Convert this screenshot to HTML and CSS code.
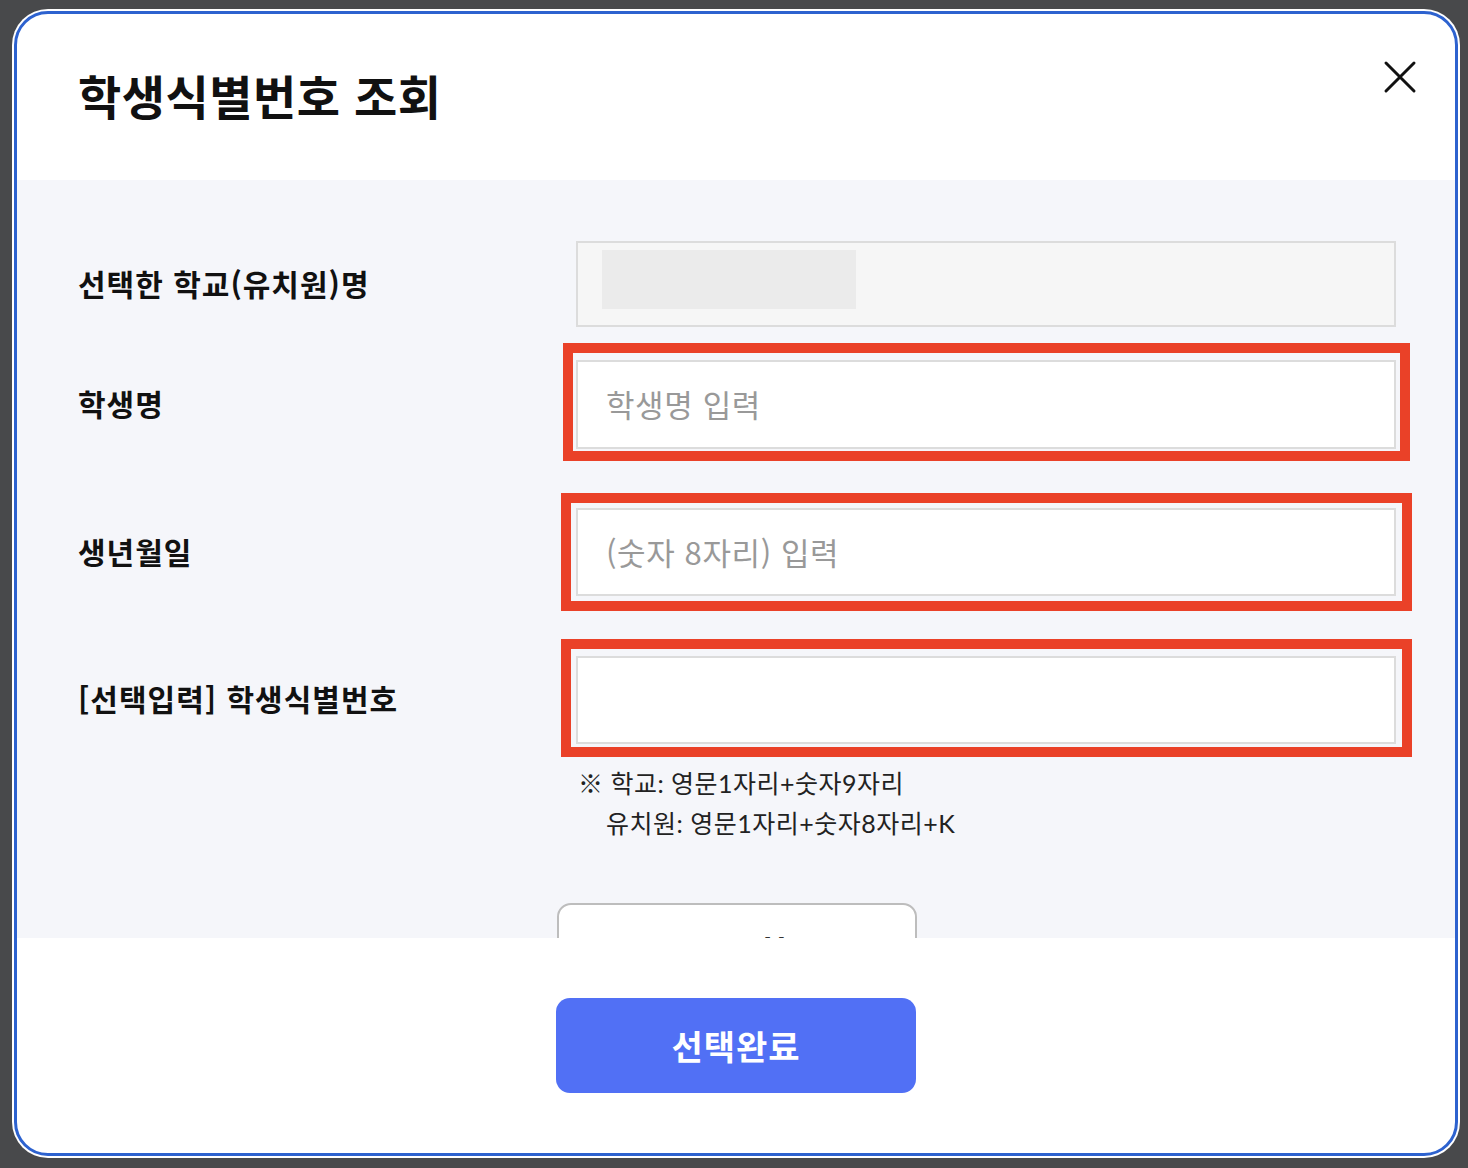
FILE: index.html
```html
<!DOCTYPE html>
<html lang="ko">
<head>
<meta charset="utf-8">
<title>학생식별번호 조회</title>
<link rel="stylesheet" href="styles.css">
</head>
<body>
<div class="modal">
  <header class="modal-header">
    <h1 class="title">학생식별번호 조회</h1>
    <button class="close" type="button" aria-label="닫기">
      <svg width="34" height="34" viewBox="0 0 34 34"><path d="M3 3 L31 31 M31 3 L3 31" stroke="#111" stroke-width="3" stroke-linecap="round" fill="none"/></svg>
    </button>
  </header>
  <section class="modal-body">
    <div class="row row-school">
      <div class="label">선택한 학교(유치원)명</div>
      <div class="field field-readonly"><span class="redacted"></span></div>
    </div>
    <div class="row row-name">
      <div class="label">학생명</div>
      <div class="field-wrap">
        <input class="field field-input" type="text" placeholder="학생명 입력">
        <span class="mark mark-name"></span>
      </div>
    </div>
    <div class="row row-birth">
      <div class="label">생년월일</div>
      <div class="field-wrap">
        <input class="field field-input" type="text" placeholder="(숫자 8자리) 입력">
        <span class="mark mark-birth"></span>
      </div>
    </div>
    <div class="row row-id">
      <div class="label">[선택입력] 학생식별번호</div>
      <div class="field-col">
        <div class="field-wrap">
          <input class="field field-input" type="text">
          <span class="mark mark-id"></span>
        </div>
        <div class="hint">
          <p class="hint-line">※ 학교: 영문1자리+숫자9자리</p>
          <p class="hint-line hint-indent">유치원: 영문1자리+숫자8자리+K</p>
        </div>
      </div>
    </div>
    <button class="btn btn-outline" type="button">조회</button>
  </section>
  <footer class="modal-footer">
    <button class="btn btn-primary" type="button">선택완료</button>
  </footer>
</div>
</body>
</html>
```
FILE: styles.css
```css
* { box-sizing: border-box; }
html, body { margin: 0; padding: 0; }
body {
  width: 1468px;
  height: 1168px;
  background: #48494b;
  font-family: "Noto Sans CJK KR", "Noto Sans", sans-serif;
  overflow: hidden;
}
.modal {
  position: relative;
  margin: 11px 0 0 14px;
  width: 1444px;
  height: 1145px;
  border: 3px solid #2d62cf;
  border-radius: 34px;
  box-shadow: 0 0 0 2px #ffffff;
  background: #ffffff;
  overflow: hidden;
  display: flex;
  flex-direction: column;
}
.modal-header {
  flex: 0 0 166px;
  padding: 50px 61px 0;
}
.title {
  margin: 0;
  font-size: 47px;
  font-weight: 700;
  line-height: 62px;
  color: #111;
  letter-spacing: 0.5px;
}
.close {
  position: absolute;
  top: 46px;
  right: 38px;
  width: 34px;
  height: 34px;
  padding: 0;
  border: 0;
  background: transparent;
}
.close svg { display: block; }
.modal-body {
  flex: 0 0 758px;
  background: #f5f6fa;
  overflow: hidden;
  padding: 61px 59px 0 61px;
}
.row {
  display: grid;
  grid-template-columns: 498px 820px;
  align-items: center;
}
.row-id { align-items: start; }
.row-name { margin-top: 33px; }
.row-birth { margin-top: 59px; }
.row-id { margin-top: 60px; }
.label {
  font-size: 30px;
  font-weight: 700;
  color: #111;
  line-height: 40px;
  letter-spacing: 1px;
  padding-bottom: 3px;
  font-family: "Noto Sans CJK KR", sans-serif;
}
.row-id .label { margin-top: 22px; }
.field {
  display: block;
  width: 820px;
  border: 2px solid #dcdcdc;
}
.field-readonly {
  height: 86px;
  background: #f6f6f6;
  padding: 7px 24px;
}
.redacted {
  display: block;
  width: 254px;
  height: 59px;
  background: #ebebeb;
}
.field-wrap { position: relative; }
.field-input {
  height: 88px;
  background: #fff;
  padding: 0 28px 2px;
  font-family: "Noto Sans CJK KR", sans-serif;
  font-size: 31px;
  letter-spacing: 0.6px;
  color: #222;
  outline: none;
}
.row-name .field-input { height: 89px; }
.field-input::placeholder { color: #999; }
.mark {
  position: absolute;
  border: 10px solid #ea4128;
  pointer-events: none;
}
.mark-name { top: -17px; left: -13px; right: -14px; bottom: -12px; }
.mark-birth { top: -15px; left: -15px; right: -16px; bottom: -15px; }
.mark-id { top: -17px; left: -15px; right: -16px; bottom: -13px; }
.hint {
  margin-top: 19px;
  padding-left: 2px;
  font-family: Lato, "Noto Sans CJK KR", sans-serif;
  font-size: 25px;
  letter-spacing: 0.5px;
  line-height: 40px;
  color: #222;
}
.hint-line { margin: 0; }
.hint-indent { padding-left: 28px; }
.btn {
  display: block;
  width: 360px;
  height: 95px;
  border-radius: 14px;
  font-family: "Noto Sans CJK KR", sans-serif;
  font-size: 34px;
  font-weight: 700;
  letter-spacing: 1px;
  line-height: 1;
}
.btn-outline {
  margin: 60px auto 0;
  background: #fff;
  border: 2px solid #bdbdbd;
  color: #333;
  padding: 2px 0 0 38px;
}
.modal-footer {
  flex: 1;
  padding-top: 60px;
}
.btn-primary {
  margin: 0 auto;
  border: 0;
  background: #5170f5;
  color: #fff;
}
```
